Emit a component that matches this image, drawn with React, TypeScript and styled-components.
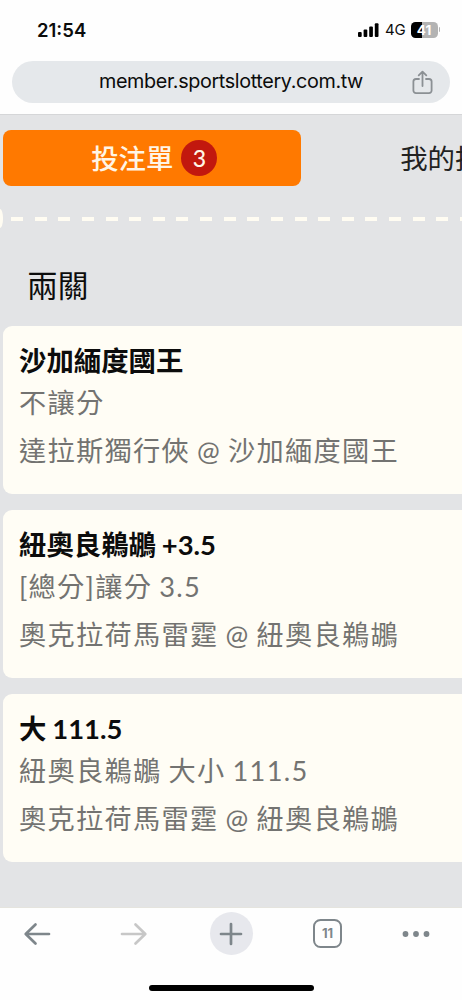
import React from 'react';
import styled, { createGlobalStyle } from 'styled-components';

const GlobalStyle = createGlobalStyle`
  * { box-sizing: border-box; }
  body { margin: 0; background: #fff; overflow: hidden; }
`;

const Screen = styled.div`
  width: 462px;
  height: 1000px;
  display: flex;
  flex-direction: column;
  overflow: hidden;
  background: #fefefe;
  color: #0c0c0c;
  font-family: Lato, 'Noto Sans CJK TC', sans-serif;
  white-space: nowrap;
`;

const StatusBar = styled.header`
  height: 61px;
  flex: none;
  display: flex;
  align-items: center;
  justify-content: space-between;
  padding: 0 22px 2px 37px;
  font-family: Inter, sans-serif;
`;

const Clock = styled.span`
  font-size: 18.5px;
  font-weight: 600;
  letter-spacing: 0;
`;

const StatusIcons = styled.div`
  display: flex;
  align-items: center;
`;

const Network = styled.span`
  margin: 1px 5px 0 6px;
  font-size: 15px;
  line-height: 18px;
  letter-spacing: -0.2px;
`;

const Battery = styled.div`
  display: flex;
  align-items: center;
  gap: 1px;
`;

const BatteryCell = styled.div`
  width: 27px;
  height: 16px;
  border-radius: 4.5px;
  background: linear-gradient(90deg, #000 0 41%, #b3b3b3 41%);
  color: #fff;
  font-size: 13.5px;
  font-weight: 700;
  line-height: 16px;
  text-align: center;
`;

const BatteryTip = styled.div`
  width: 1.5px;
  height: 5px;
  border-radius: 0 2px 2px 0;
  background: #b3b3b3;
`;

const AddressArea = styled.div`
  height: 54px;
  flex: none;
  padding: 0 12px;
  border-bottom: 1px solid #d5d6d8;
`;

const AddressBar = styled.div`
  height: 42px;
  border-radius: 21px;
  background: #e5e8eb;
  display: flex;
  align-items: center;
  justify-content: space-between;
  padding: 0 17px 0 87px;
`;

const Url = styled.span`
  font-family: Inter, sans-serif;
  font-size: 19.8px;
  line-height: 40px;
  height: 42px;
  letter-spacing: -0.37px;
`;

const Page = styled.main`
  flex: 1;
  min-height: 0;
  overflow: hidden;
  background: #e3e4e6;
  border-bottom: 1px solid #e5e4de;
  display: flex;
  flex-direction: column;
`;

const Tabs = styled.nav`
  display: flex;
  flex: none;
  padding: 15px 0 0 3px;
`;

const Tab = styled.div<{ $active?: boolean }>`
  width: ${(p) => (p.$active ? '298px' : '308px')};
  height: 55.5px;
  flex: none;
  display: flex;
  align-items: center;
  justify-content: center;
  gap: 8px;
  border-radius: 8px;
  background: ${(p) => (p.$active ? '#ff7900' : 'transparent')};
  color: ${(p) => (p.$active ? '#fff5e6' : '#222')};
  font-size: 27.4px;
  font-weight: ${(p) => (p.$active ? 500 : 400)};
  padding-left: ${(p) => (p.$active ? '4.5px' : '0')};
`;

const TabLabel = styled.span`
  padding-bottom: 2px;
`;

const Count = styled.span`
  width: 36px;
  height: 36px;
  border-radius: 50%;
  background: #c2180e;
  font-size: 23px;
  font-weight: 500;
  line-height: 36px;
  text-align: center;
`;

const Perforation = styled.div`
  height: 20px;
  flex: none;
  margin-top: 22.5px;
  display: flex;
  align-items: center;
  gap: 7.6px;
`;

const Notch = styled.div`
  width: 3px;
  height: 19px;
  border-radius: 0 3px 3px 0 / 0 10px 10px 0;
  background: #fffcf2;
`;

const Dashes = styled.div`
  flex: 1;
  height: 4px;
  margin-top: 2px;
  background: repeating-linear-gradient(90deg, #fffcf2 0 12px, transparent 12px 23.63px);
`;

const Heading = styled.h1`
  margin: 26px 0 0;
  padding-left: 27px;
  height: 72px;
  font-size: 30.7px;
  font-weight: 400;
  line-height: 64px;
`;

const Bets = styled.section`
  display: flex;
  flex-direction: column;
  gap: 16px;
  padding-left: 3px;
`;

const Card = styled.article`
  height: 168px;
  flex: none;
  border-radius: 9px 0 0 9px;
  background: #fffdf5;
  padding: 14px 0 0 16px;
`;

const Pick = styled.h2`
  margin: 0;
  height: 42px;
  font-size: 27.4px;
  font-weight: 700;
  line-height: 42px;
  word-spacing: -0.8px;
`;

const Detail = styled.p<{ $height: number }>`
  margin: 0;
  height: ${(p) => p.$height}px;
  color: #737371;
  font-size: 27.2px;
  font-weight: 400;
  line-height: ${(p) => p.$height}px;
  letter-spacing: 1.3px;
  word-spacing: -1.2px;
`;

const Toolbar = styled.footer`
  height: 92px;
  flex: none;
  display: flex;
  flex-direction: column;
  align-items: center;
`;

const Actions = styled.div`
  width: 100%;
  height: 77px;
  padding: 4px 0 0;
  display: grid;
  grid-template-columns: 74px 120px 74px 119px 57px;
  justify-items: center;
`;

const Action = styled.div`
  width: 30px;
  height: 43px;
  display: flex;
  align-items: center;
  justify-content: center;
  color: #7e868b;
`;

const NewTab = styled(Action)`
  width: 43px;
  border-radius: 50%;
  background: #e7e8ed;
`;

const TabCount = styled.span`
  width: 29px;
  height: 29px;
  flex: none;
  border: 2px solid #7e868b;
  border-radius: 7.5px;
  font: 700 13px/25px Inter, sans-serif;
  text-align: center;
`;

const HomeIndicator = styled.div`
  width: 165px;
  height: 6px;
  border-radius: 3px;
  background: #000;
`;

const bets = [
  { pick: '沙加緬度國王', market: '不讓分', match: '達拉斯獨行俠 @ 沙加緬度國王' },
  { pick: '紐奧良鵜鶘 +3.5', market: '[總分]讓分 3.5', match: '奧克拉荷馬雷霆 @ 紐奧良鵜鶘' },
  { pick: '大 111.5', market: '紐奧良鵜鶘 大小 111.5', match: '奧克拉荷馬雷霆 @ 紐奧良鵜鶘' },
];

const Signal = () => (
  <svg width="21" height="14" viewBox="0 0 21 14">
    <rect x="0" y="9" width="3.7" height="5" rx="1" />
    <rect x="5.6" y="6.5" width="3.7" height="7.5" rx="1" />
    <rect x="11.2" y="3.5" width="3.7" height="10.5" rx="1" />
    <rect x="16.8" y="0.3" width="3.7" height="13.7" rx="1" />
  </svg>
);

const Share = () => (
  <svg width="21" height="25" viewBox="0 0 21 25" fill="none" stroke="#8b9094" strokeWidth="1.8" strokeLinecap="round" strokeLinejoin="round">
    <path d="M7 9H4a2.6 2.6 0 0 0-2.6 2.6v9A2.6 2.6 0 0 0 4 23.2h13a2.6 2.6 0 0 0 2.6-2.6v-9A2.6 2.6 0 0 0 17 9h-3M10.5 16V2M6.7 5.4l3.8-3.8 3.8 3.8" />
  </svg>
);

const Arrow = ({ forward = false }: { forward?: boolean }) => (
  <svg width="28" height="24" viewBox="0 0 28 24" fill="none" stroke={forward ? '#c7c7c7' : '#7e868b'} strokeWidth="2.7" strokeLinecap="round" strokeLinejoin="round">
    <path d={forward ? 'M2 12H25M15.5 2.5L25.3 12L15.5 21.5' : 'M26 12H3M12.5 2.5L2.7 12L12.5 21.5'} />
  </svg>
);

export default function App() {
  return (
    <Screen>
      <GlobalStyle />
      <StatusBar>
        <Clock>21:54</Clock>
        <StatusIcons>
          <Signal />
          <Network>4G</Network>
          <Battery>
            <BatteryCell>41</BatteryCell>
            <BatteryTip />
          </Battery>
        </StatusIcons>
      </StatusBar>
      <AddressArea>
        <AddressBar>
          <Url>member.sportslottery.com.tw</Url>
          <Share />
        </AddressBar>
      </AddressArea>
      <Page>
        <Tabs>
          <Tab $active>
            <TabLabel>投注單</TabLabel>
            <Count>3</Count>
          </Tab>
          <Tab>
            <TabLabel>我的投注</TabLabel>
          </Tab>
        </Tabs>
        <Perforation>
          <Notch />
          <Dashes />
        </Perforation>
        <Heading>兩關</Heading>
        <Bets>
          {bets.map((bet) => (
            <Card key={bet.pick}>
              <Pick>{bet.pick}</Pick>
              <Detail $height={42}>{bet.market}</Detail>
              <Detail $height={54}>{bet.match}</Detail>
            </Card>
          ))}
        </Bets>
      </Page>
      <Toolbar>
        <Actions>
          <Action><Arrow /></Action>
          <Action><Arrow forward /></Action>
          <NewTab>
            <svg width="24" height="24" viewBox="0 0 24 24" fill="none" stroke="currentColor" strokeWidth="2.7" strokeLinecap="round">
              <path d="M12 2V22M2 12H22" />
            </svg>
          </NewTab>
          <Action><TabCount>11</TabCount></Action>
          <Action>
            <svg width="28" height="8" viewBox="0 0 28 8" fill="currentColor">
              <circle cx="3.5" cy="4" r="2.9" />
              <circle cx="14" cy="4" r="2.9" />
              <circle cx="24.5" cy="4" r="2.9" />
            </svg>
          </Action>
        </Actions>
        <HomeIndicator />
      </Toolbar>
    </Screen>
  );
}
